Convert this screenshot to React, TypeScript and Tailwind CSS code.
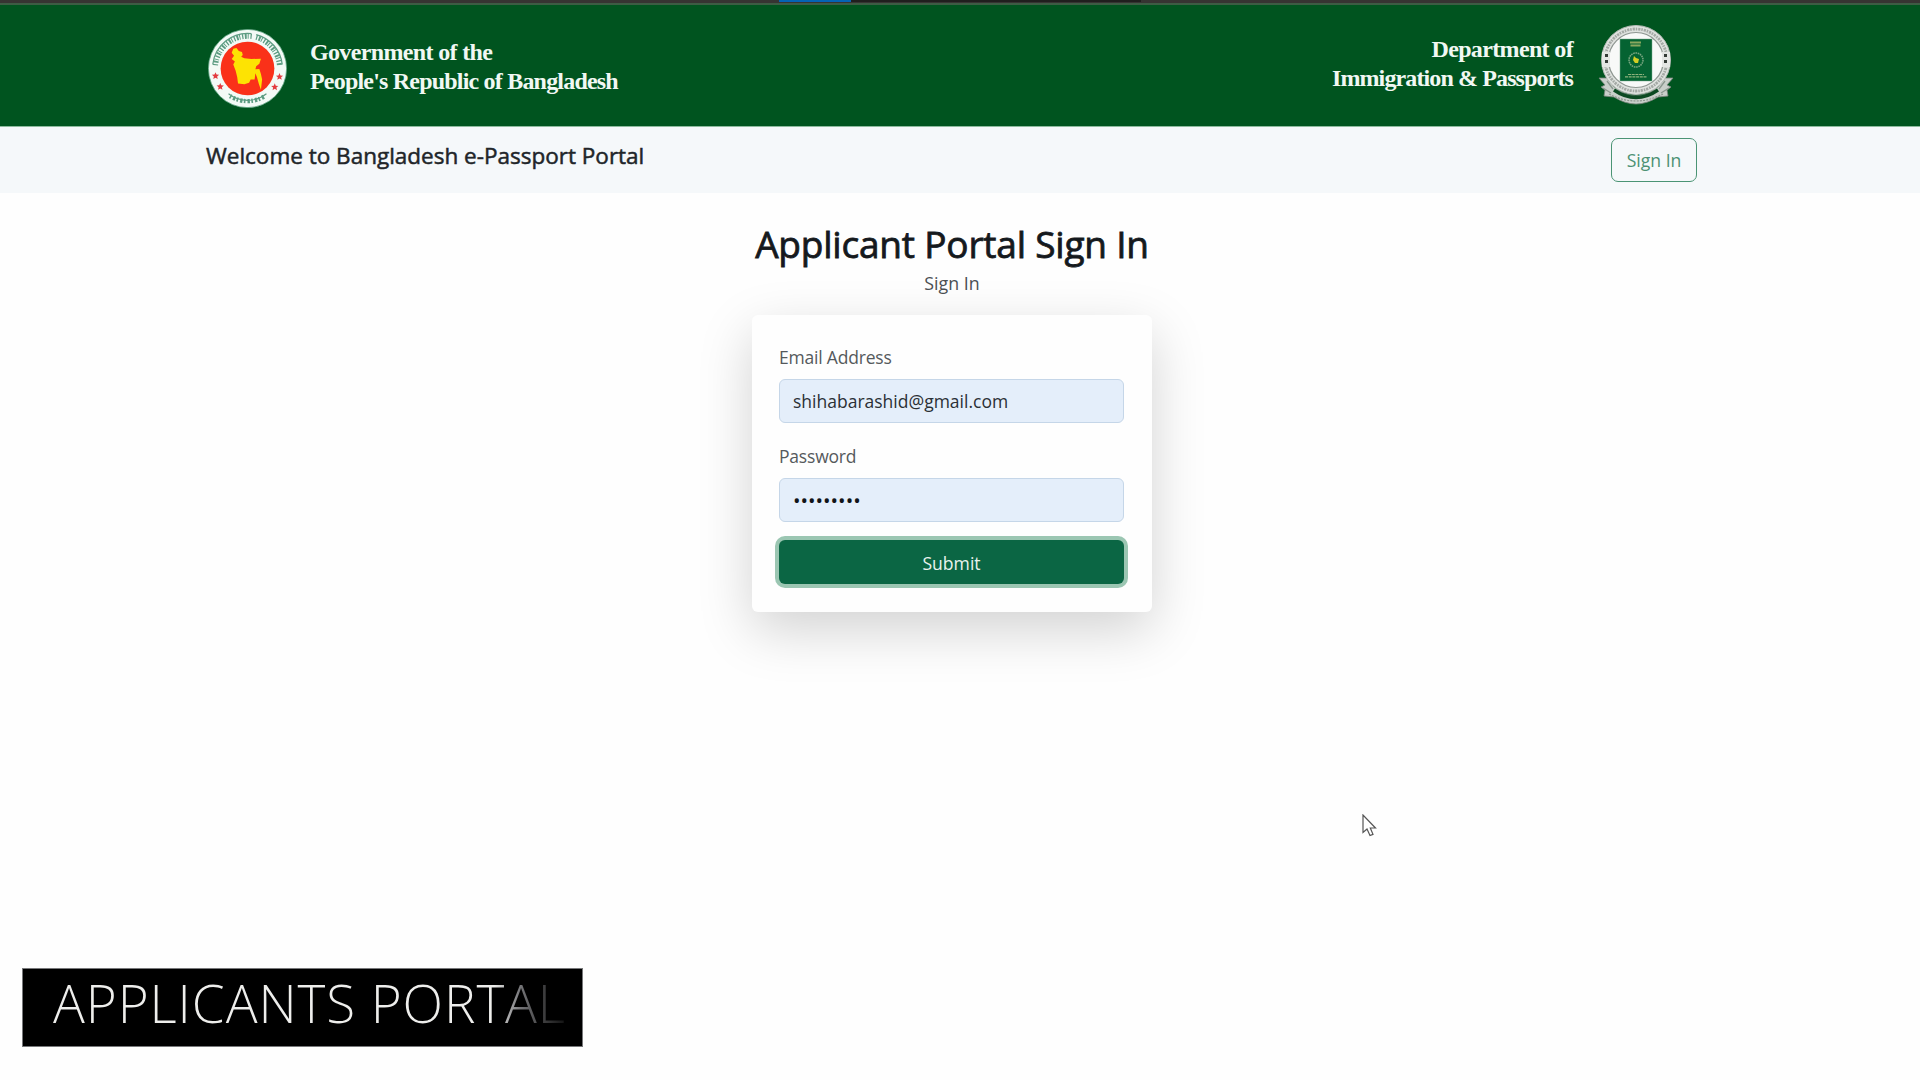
const sans = "font-['Open_Sans','Noto_Sans',sans-serif]";

const starPoints = (cx: number, cy: number, r: number) =>
  Array.from({ length: 10 }, (_, i) => {
    const a = -Math.PI / 2 + (i * Math.PI) / 5;
    const q = i % 2 ? r * 0.45 : r;
    return `${(cx + q * Math.cos(a)).toFixed(2)},${(cy + q * Math.sin(a)).toFixed(2)}`;
  }).join(" ");

function GovernmentSeal() {
  return (
    <svg viewBox="0 0 100 100" className="h-[79px] w-[79px] shrink-0">
      <circle cx="50" cy="50" r="49.5" fill="#f3faf6" stroke="#5fa583" strokeWidth="1" />
      <path d="M9.500 46A41 41 0 0 1 56 9.500" fill="none" stroke="#5c9c82" strokeWidth="6.500" strokeDasharray="1.600 1.900 2.400 1.200 1.200 2.300" />
      <path d="M61 10.500A41 41 0 0 1 90.500 46" fill="none" stroke="#5c9c82" strokeWidth="6.500" strokeDasharray="1.600 1.900 2.400 1.200 1.200 2.300" />
      <path d="M6 45A44.500 44.500 0 0 1 55 5.800M61 7A44.500 44.500 0 0 1 94 45" fill="none" stroke="#5c9c82" strokeWidth="1.600" />
      <path d="M28 85A41.500 41.500 0 0 0 72 85" fill="none" stroke="#5c9c82" strokeWidth="5.500" strokeDasharray="2 2.500 3 1.800" />
      <path d="M26 82A38.500 38.500 0 0 0 74 82" fill="none" stroke="#5c9c82" strokeWidth="1.400" />
      <circle cx="50" cy="50" r="34" fill="#fa3119" />
      {[[9.500, 59.500], [15.500, 73], [90.500, 60.500], [84.500, 73.500]].map(([x, y]) => (
        <polygon key={x} points={starPoints(x, y, 4.800)} fill="#e33b3f" />
      ))}
      <path
        d="M32 25L36 24L39 28L43 29L44 33L42 35L46 37L55 38L67 37.500L65 44L61 47L60 51L65 50.500L67 57L68.500 64L67 77L64.500 70L62 61L60 56L59 64L54 64L52 68L46 70L38 69L37 61L35 53L32 45L34 41L30 38L33 34L30 30Z"
        fill="#fde303"
      />
    </svg>
  );
}

function PassportSeal() {
  return (
    <svg viewBox="0 0 78 82" className="h-[82px] w-[78px] shrink-0">
      <path d="M2 54L13 54L16 62Q39 82 62 62L65 54L76 54L70 61L74 63L70 66L71 72L61 73Q50 80 39 80Q28 80 17 73L7 72L8 66L4 63L8 61Z" fill="#c9cfca" stroke="#7c877f" strokeWidth=".8" />
      <path d="M10 57L16 65M6 64L14 69M68 57L62 65M72 64L64 69" stroke="#8a978e" strokeWidth="1.300" />
      <path d="M17 66Q39 81 61 66" fill="none" stroke="#0c4a22" strokeWidth="3.500" />
      <path d="M12 70Q39 84 66 70" fill="none" stroke="#8d968f" strokeWidth="1.200" strokeDasharray="2 1.200" />
      <circle cx="39" cy="36" r="34.500" fill="#dfe2df" stroke="#b4bab5" strokeWidth="1" />
      <circle cx="39" cy="36" r="31" fill="none" stroke="#a4a9a5" strokeWidth="2.800" strokeDasharray="1.500 1 2.200 .9" />
      <circle cx="39" cy="36" r="27.500" fill="#f8f9f8" stroke="#8e9691" strokeWidth="1.200" />
      <path d="M5 28h8v15h-8zM65 28h8v15h-8z" fill="#e4e6e4" />
      <path d="M8 30h3v3h-3zM8 36h3v3h-3zM67 30h3v3h-3zM67 36h3v3h-3z" fill="#343b37" />
      <path d="M23 15H55V57H23Z" fill="#056332" stroke="#7fae91" strokeWidth=".5" />
      <path d="M33 18.500H44M33.500 21.500H43.500" stroke="#89a75e" strokeWidth="2" />
      <circle cx="39" cy="36" r="7" fill="none" stroke="#79a681" strokeWidth="1.500" strokeDasharray="1.600 .7" />
      <path d="M37 32L39 34L42 35L41 39L38 39L36 36Z" fill="#d3ce24" />
      <path d="M31 50.500H47M28 52.800H50" stroke="#8fb27c" strokeWidth="1.200" strokeDasharray="3 .7" />
    </svg>
  );
}

function Field({ label, children }: { label: string; children: React.ReactNode }) {
  return (
    <div className="flex flex-col gap-[9px]">
      <div className="pt-px text-[17.5px] leading-[26px] tracking-[-0.2px] text-[#55595c]">{label}</div>
      <div className="flex h-11 items-center rounded-[6px] border border-[#c5d6e8] bg-[#e4eefa] px-[13px] pt-px text-[17.5px] text-[#2b3035]">
        {children}
      </div>
    </div>
  );
}

export default function App() {
  return (
    <div className={`${sans} relative flex h-[1080px] w-[1920px] flex-col overflow-hidden bg-[#fefefe]`}>
      <div className="h-[3px] bg-[#363432]">
        <div className="ml-[779px] flex h-[2px] w-[362px] bg-[#201f1e]">
          <div className="w-[72px] bg-[#0563b4]" />
        </div>
      </div>
      <div className="h-[2px] bg-[#3d5c44]" />

      <header className="flex h-[122px] justify-between border-b border-[#8dbb9e] bg-[#00541f] pr-[245px] pl-[208px] font-['Liberation_Serif',serif] text-[24px] leading-[29px] font-bold text-[#f1f8f3]">
        <div className="flex gap-[23px]">
          <div className="pt-[24px]">
            <GovernmentSeal />
          </div>
          <div className="pt-[33px] whitespace-nowrap">
            <div className="tracking-[-0.65px]">Government of the</div>
            <div className="tracking-[-0.8px]">People's Republic of Bangladesh</div>
          </div>
        </div>
        <div className="flex gap-[24px]">
          <div className="pt-[30px] text-right whitespace-nowrap">
            <div className="tracking-[-0.65px]">Department of</div>
            <div className="tracking-[-0.88px]">Immigration &amp; Passports</div>
          </div>
          <div className="pt-[19px]">
            <PassportSeal />
          </div>
        </div>
      </header>

      <nav className="flex h-[66px] items-start justify-between bg-[#f5f8fa] pr-[223px] pl-[206px]">
        <div className="pt-[15px] text-[22.5px] leading-[28px] text-[#212529] [-webkit-text-stroke:0.5px_#212529]">
          Welcome to Bangladesh e-Passport Portal
        </div>
        <button className="mt-[11px] h-11 w-[86px] rounded-[7px] border border-[#4a9474] text-[17.6px] text-[#4c9173]">
          Sign In
        </button>
      </nav>

      <main className="ml-[752px] flex w-[400px] flex-col items-center pt-[29px]">
        <h1 className="text-[37px] leading-[44px] tracking-[-0.2px] whitespace-nowrap text-[#15191d] [-webkit-text-stroke:0.8px_#15191d]">
          Applicant Portal Sign In
        </h1>
        <div className="mt-1 text-[17.8px] leading-[26px] text-[#4c5054]">Sign In</div>
        <form className="mt-[19px] flex h-[297px] w-full flex-col rounded-[6px] bg-[#fefefe] pt-7 pr-7 pl-[27px] shadow-[0_18px_54px_rgba(0,0,0,0.175)]">
          <Field label="Email Address">shihabarashid@gmail.com</Field>
          <div className="h-[19px]" />
          <Field label="Password">
            <span className="pt-px text-[20px] leading-none text-[#111418]">•••••••••</span>
          </Field>
          <button type="button" className="mt-[18px] h-11 shrink-0 rounded-[6px] bg-[#0b6644] pt-[2px] text-[17.6px] text-[#e9f3ee] shadow-[0_0_0_4px_#9bc6b2]">
            Submit
          </button>
        </form>
      </main>

      <div className="absolute top-[968px] left-[22px] flex h-[79px] w-[561px] items-start border border-[#77787a] bg-black pt-[2px] pl-[30px]">
        <div className="bg-linear-to-r from-[#eeeeec] from-86% via-[#77777a] via-91% to-[#111111] to-100% bg-clip-text text-[53px] leading-[64px] font-light tracking-[0.9px] whitespace-nowrap text-transparent">
          APPLICANTS PORTAL
        </div>
      </div>

      <svg viewBox="0 0 16 24" className="absolute top-[814px] left-[1362px] h-6 w-4">
        <path d="M1 1V18.500L5 15L8 21.500L11 20.300L8.300 14H13.500Z" fill="#fff" stroke="#555" strokeWidth="1.200" />
      </svg>
    </div>
  );
}
